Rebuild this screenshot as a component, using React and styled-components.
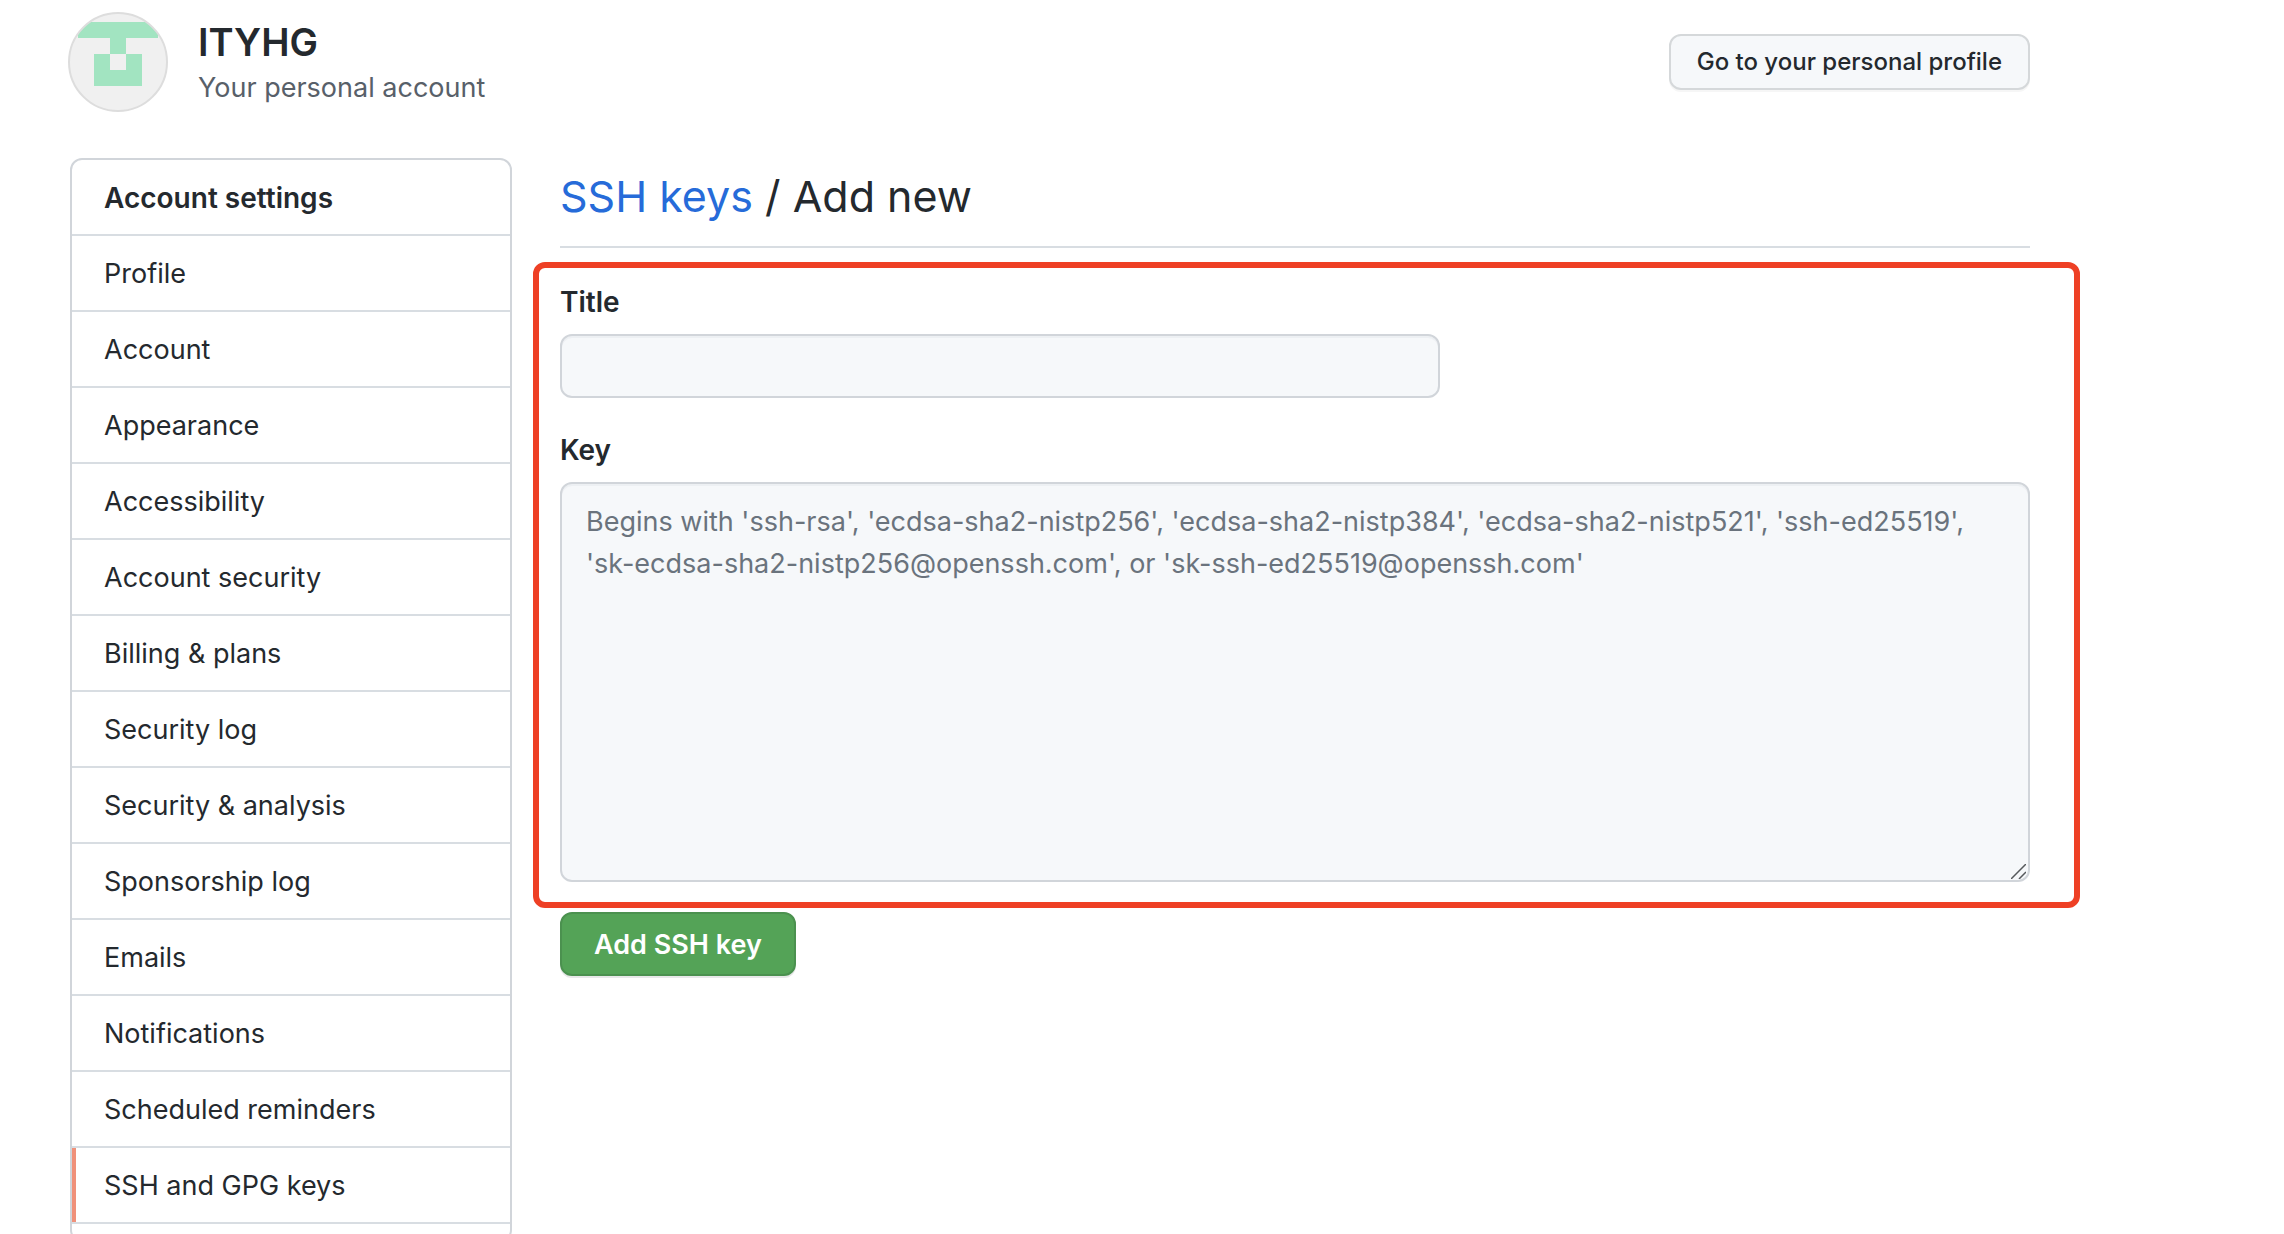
import React, { useState } from 'react';
import styled, { createGlobalStyle } from 'styled-components';

const GlobalStyle = createGlobalStyle`
  * {
    box-sizing: border-box;
  }

  body {
    margin: 0;
    background-color: #fff;
    color: #24292e;
    font-family: Inter, 'Liberation Sans', sans-serif;
    font-size: 27px;
    line-height: 42px;
  }
`;

const Page = styled.div`
  height: 100vh;
  overflow: hidden;
  padding: 12px 254px 0 68px;
`;

const Header = styled.header`
  display: flex;
  align-items: center;
  gap: 30px;
  height: 100px;
`;

const Avatar = styled.svg`
  flex: none;
  width: 100px;
  height: 100px;
`;

const Owner = styled.div`
  flex: 1;
  padding-top: 2px;
`;

const OwnerName = styled.h1`
  margin: 0;
  font-size: 38px;
  font-weight: 600;
  line-height: 50px;
`;

const OwnerType = styled.p`
  margin: 0;
  color: #586069;
`;

const ProfileButton = styled.button`
  height: 56px;
  padding: 0 26px 2px;
  border: 2px solid #d5d8da;
  border-radius: 12px;
  background-color: #f6f8fa;
  box-shadow: 0 2px 0 rgba(27, 31, 35, 0.04);
  color: #24292e;
  font-family: inherit;
  font-size: 24px;
  font-weight: 500;
  cursor: pointer;
`;

const Columns = styled.div`
  display: flex;
  align-items: flex-start;
  gap: 48px;
  margin-top: 46px;
  padding-left: 2px;
`;

const Menu = styled.nav`
  flex: none;
  width: 442px;
  padding-bottom: 16px;
  border: 2px solid #d1d5da;
  border-radius: 12px;
  overflow: hidden;
`;

const MenuHeading = styled.h2`
  margin: 0;
  padding: 17px 32px 15px;
  border-bottom: 2px solid #d8dde2;
  font-size: 28px;
  font-weight: 600;
  line-height: 42px;
`;

const MenuItem = styled.a`
  display: block;
  padding: 17px 32px 15px;
  border-bottom: 2px solid #d8dde2;
  box-shadow: ${({ $active }) => ($active ? 'inset 4px 0 0 #f0917a' : 'none')};
  color: #24292e;
  text-decoration: none;

  &:hover {
    background-color: #f6f8fa;
  }
`;

const Main = styled.main`
  flex: 1;
  min-width: 0;
`;

const Subhead = styled.h2`
  margin: 0;
  padding: 2px 0 14px;
  border-bottom: 2px solid #d8dde2;
  font-size: 43px;
  font-weight: 400;
  line-height: 72px;

  a {
    color: #266bd9;
    text-decoration: none;
  }
`;

const Highlight = styled.div`
  margin: 14px -50px 4px -27px;
  padding: 13px 44px 20px 21px;
  border: 6px solid #ee4025;
  border-radius: 12px;
`;

const Label = styled.label`
  display: block;
  margin-bottom: 11px;
  font-size: 28px;
  font-weight: 600;
`;

const TextInput = styled.input`
  display: block;
  width: 880px;
  max-width: 100%;
  height: 64px;
  margin-bottom: 31px;
  padding: 0 24px;
  border: 2px solid #d1d5da;
  border-radius: 12px;
  background-color: #f6f8fa;
  box-shadow: inset 0 2px 0 rgba(225, 228, 232, 0.4);
  font: inherit;
`;

const KeyBox = styled.div`
  position: relative;
`;

const KeyInput = styled.textarea`
  display: block;
  width: 100%;
  height: 400px;
  padding: 17px 24px;
  border: 2px solid #d1d5da;
  border-radius: 12px;
  background-color: #f6f8fa;
  box-shadow: inset 0 2px 0 rgba(225, 228, 232, 0.4);
  color: #24292e;
  font: inherit;
  resize: vertical;

  &::placeholder {
    color: #6a737d;
    opacity: 1;
  }

  &::-webkit-resizer {
    display: none;
  }
`;

const Grip = styled.svg`
  position: absolute;
  right: 4px;
  bottom: 3px;
  width: 15px;
  height: 15px;
  pointer-events: none;
`;

const SubmitButton = styled.button`
  height: 64px;
  padding: 0 32px;
  border: 2px solid #4b914f;
  border-radius: 12px;
  background-color: #54a357;
  box-shadow: 0 2px 0 rgba(27, 31, 35, 0.1);
  color: #fff;
  font-family: inherit;
  font-size: 27px;
  font-weight: 600;
  cursor: pointer;
`;

const menuItems = [
  'Profile',
  'Account',
  'Appearance',
  'Accessibility',
  'Account security',
  'Billing & plans',
  'Security log',
  'Security & analysis',
  'Sponsorship log',
  'Emails',
  'Notifications',
  'Scheduled reminders',
  'SSH and GPG keys',
];

const keyPlaceholder =
  "Begins with 'ssh-rsa', 'ecdsa-sha2-nistp256', 'ecdsa-sha2-nistp384', 'ecdsa-sha2-nistp521', 'ssh-ed25519', 'sk-ecdsa-sha2-nistp256@openssh.com', or 'sk-ssh-ed25519@openssh.com'";

const Identicon = () => (
  <Avatar viewBox="0 0 100 100" role="img" aria-label="ITYHG">
    <clipPath id="avatar-clip">
      <circle cx="50" cy="50" r="49" />
    </clipPath>
    <g clipPath="url(#avatar-clip)" shapeRendering="crispEdges">
      <rect width="100" height="100" fill="#f0f0f0" />
      <path d="M10 10h80v16H58v16h16v32H26V42h16V26H10z" fill="#a2e4c1" />
      <rect x="42" y="42" width="16" height="16" fill="#f0f0f0" />
    </g>
    <circle cx="50" cy="50" r="49" fill="none" stroke="#dddddd" strokeWidth="2" />
  </Avatar>
);

const App = () => {
  const [title, setTitle] = useState('');
  const [key, setKey] = useState('');

  return (
    <>
      <GlobalStyle />
      <Page>
        <Header>
          <Identicon />
          <Owner>
            <OwnerName>ITYHG</OwnerName>
            <OwnerType>Your personal account</OwnerType>
          </Owner>
          <ProfileButton type="button">Go to your personal profile</ProfileButton>
        </Header>
        <Columns>
          <Menu aria-label="Account settings">
            <MenuHeading>Account settings</MenuHeading>
            {menuItems.map((item) => (
              <MenuItem key={item} href="#" $active={item === 'SSH and GPG keys'}>
                {item}
              </MenuItem>
            ))}
          </Menu>
          <Main>
            <Subhead>
              <a href="#">SSH keys</a> / Add new
            </Subhead>
            <form onSubmit={(e) => e.preventDefault()}>
              <Highlight>
                <Label htmlFor="key-title">Title</Label>
                <TextInput
                  id="key-title"
                  type="text"
                  value={title}
                  onChange={(e) => setTitle(e.target.value)}
                />
                <Label htmlFor="key-body">Key</Label>
                <KeyBox>
                  <KeyInput
                    id="key-body"
                    placeholder={keyPlaceholder}
                    value={key}
                    onChange={(e) => setKey(e.target.value)}
                  />
                  <Grip viewBox="0 0 15 15" aria-hidden="true">
                    <path d="M0 15L15 0M8 15L15 8" fill="none" stroke="#56595c" strokeWidth="1.5" />
                  </Grip>
                </KeyBox>
              </Highlight>
              <SubmitButton type="submit">Add SSH key</SubmitButton>
            </form>
          </Main>
        </Columns>
      </Page>
    </>
  );
};

export default App;
